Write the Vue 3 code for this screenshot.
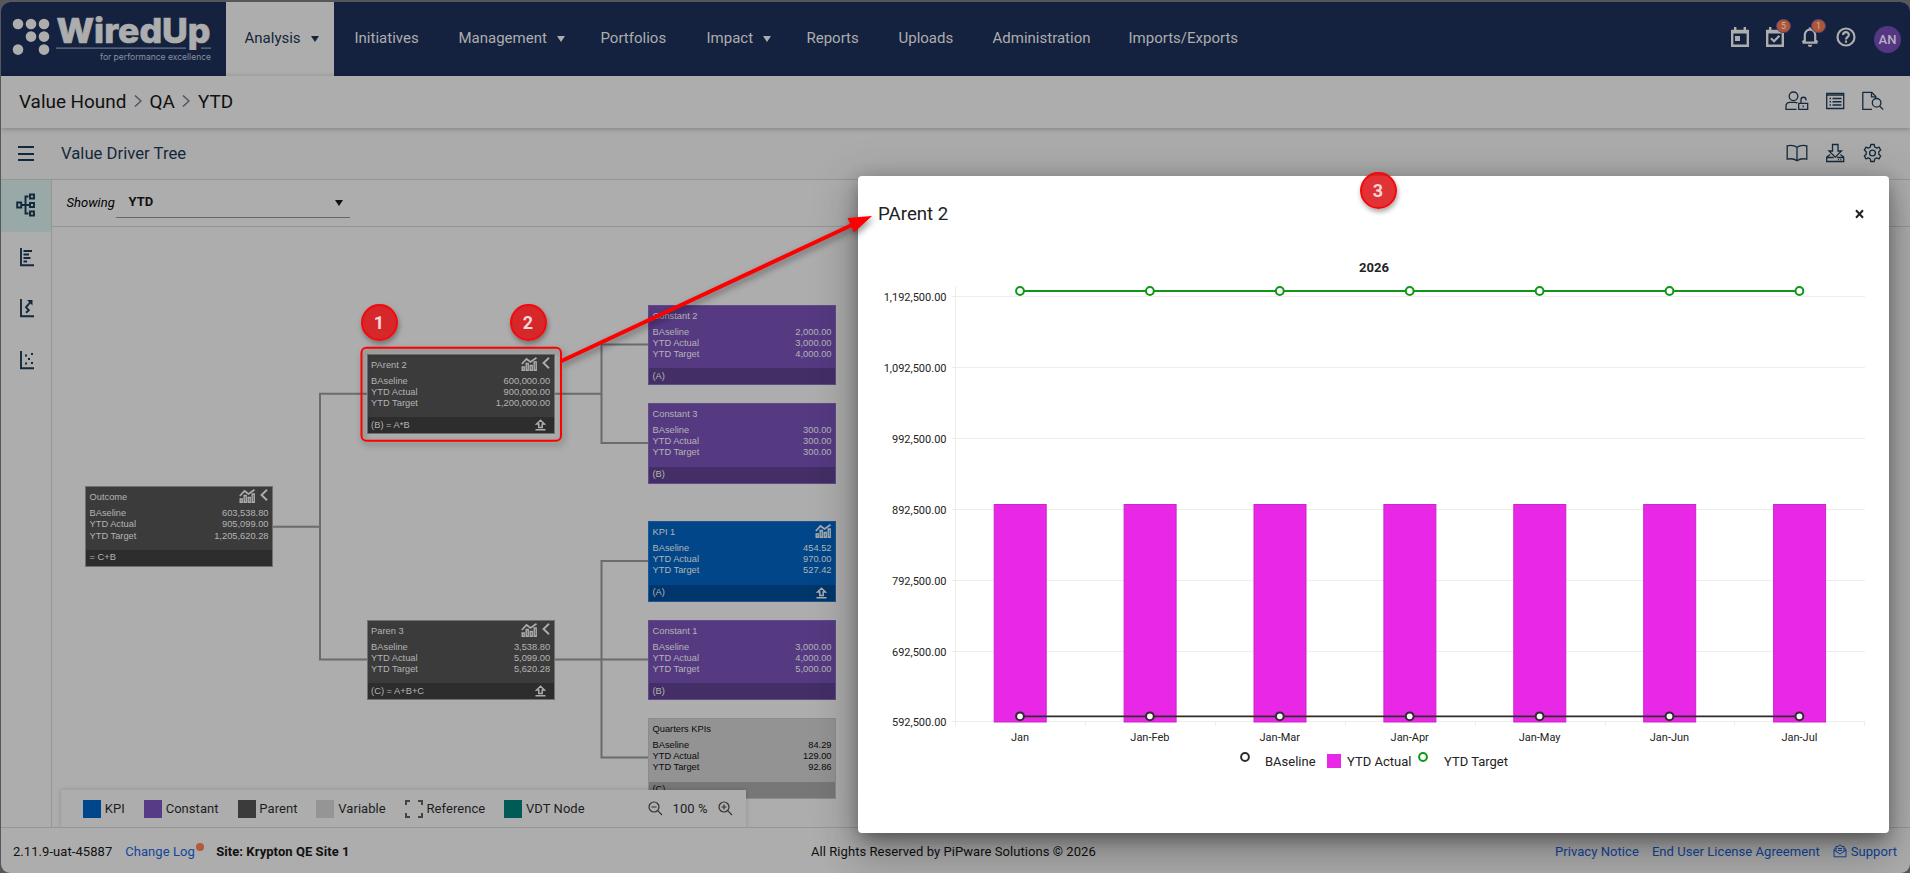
<script setup>
const nav = [
  { t: 'Analysis', caret: true, active: true },
  { t: 'Initiatives' },
  { t: 'Management', caret: true },
  { t: 'Portfolios' },
  { t: 'Impact', caret: true },
  { t: 'Reports' },
  { t: 'Uploads' },
  { t: 'Administration' },
  { t: 'Imports/Exports' },
]

const nodes = [
  { name: 'Outcome', kind: 'parent', x: 85, y: 486.2, v: ['603,538.80', '905,099.00', '1,205,620.28'], f: '= C+B', chart: true, fold: true },
  { name: 'PArent 2', kind: 'parent', x: 366.6, y: 353.8, v: ['600,000.00', '900,000.00', '1,200,000.00'], f: '(B) = A*B', chart: true, fold: true, up: true },
  { name: 'Paren 3', kind: 'parent', x: 366.6, y: 619.6, v: ['3,538.80', '5,099.00', '5,620.28'], f: '(C) = A+B+C', chart: true, fold: true, up: true },
  { name: 'Constant 2', kind: 'constant', x: 648, y: 304.6, v: ['2,000.00', '3,000.00', '4,000.00'], f: '(A)' },
  { name: 'Constant 3', kind: 'constant', x: 648, y: 403, v: ['300.00', '300.00', '300.00'], f: '(B)' },
  { name: 'KPI 1', kind: 'kpi', x: 648, y: 521, v: ['454.52', '970.00', '527.42'], f: '(A)', chart: true, up: true },
  { name: 'Constant 1', kind: 'constant', x: 648, y: 619.6, v: ['3,000.00', '4,000.00', '5,000.00'], f: '(B)' },
  { name: 'Quarters KPIs', kind: 'variable', x: 648, y: 718, v: ['84.29', '129.00', '92.86'], f: '(C)' },
]
const rowNames = ['BAseline', 'YTD Actual', 'YTD Target']

const legend = [
  { t: 'KPI', c: 'kpi' },
  { t: 'Constant', c: 'constant' },
  { t: 'Parent', c: 'parent' },
  { t: 'Variable', c: 'variable' },
  { t: 'Reference', c: 'reference' },
  { t: 'VDT Node', c: 'vdt' },
]

const ticks = ['1,192,500.00', '1,092,500.00', '992,500.00', '892,500.00', '792,500.00', '692,500.00', '592,500.00']
const months = ['Jan', 'Jan-Feb', 'Jan-Mar', 'Jan-Apr', 'Jan-May', 'Jan-Jun', 'Jan-Jul']
const gy = (i) => 120.5 + Math.round(i * 70.9)
const cx = (i) => 162 + i * 129.9
</script>

<template>
  <div class="frame">
    <div class="app">
      <header class="topbar">
        <svg class="logo" width="225" height="74" viewBox="1 2 225 74">
          <g fill="#adadad">
            <circle cx="18" cy="24" r="5.3" /><circle cx="31" cy="24" r="5.3" /><circle cx="44" cy="24" r="5.3" />
            <circle cx="31" cy="36.6" r="5.3" /><circle cx="44" cy="36.6" r="5.3" />
            <circle cx="18" cy="49.6" r="5.3" /><circle cx="44" cy="49.6" r="5.3" />
          </g>
          <path d="M56 48.2H186M201 48.2H211" stroke="#6b7485" stroke-width="1.3" />
          <text class="brand" x="56.500" y="43" textLength="154" lengthAdjust="spacingAndGlyphs">WiredUp</text>
          <text class="tag" x="100" y="60" textLength="111" lengthAdjust="spacingAndGlyphs">for performance excellence</text>
        </svg>
        <nav class="nav">
          <div v-for="n in nav" :key="n.t" class="nav-item" :class="{ active: n.active }">
            <span>{{ n.t }}</span><i v-if="n.caret" class="caret"></i>
          </div>
        </nav>
        <div class="top-icons">
          <svg width="18" height="20" viewBox="0 0 18 20"><path d="M1.2 4h15.6v14.8H1.2z" fill="none" stroke="#adadad" stroke-width="2.4" /><path d="M1 3h16v3.500H1zM3 0h2.4v4H3zM12.6 0H15v4h-2.4zM4 9h5v5H4z" fill="#adadad" /></svg>
          <div class="with-badge">
            <svg width="18" height="20" viewBox="0 0 18 20"><path d="M1.2 4h15.6v14.8H1.2z" fill="none" stroke="#adadad" stroke-width="2.4" /><path d="M1 3h16v3.500H1zM3 0h2.4v4H3zM12.6 0H15v4h-2.4z" fill="#adadad" /><path d="M5 11.3l3 3 5.4-5.600" fill="none" stroke="#adadad" stroke-width="2.200" /></svg>
            <b>5</b>
          </div>
          <div class="with-badge">
            <svg width="18" height="20" viewBox="0 0 18 20"><path d="M1.500 15.700h15M3.800 15V8.500C3.800 5 6 2.600 9 2.600s5.200 2.400 5.200 5.900V15M1.500 15.500l2.300-2.500M16.500 15.500l-2.300-2.500" fill="none" stroke="#adadad" stroke-width="2.200" /><path d="M7.700.5h2.600v2.500H7.700zM6.800 17.700h4.400a2.200 2.200 0 0 1-4.400 0z" fill="#adadad" /></svg>
            <b>1</b>
          </div>
          <svg width="20" height="20" viewBox="0 0 20 20"><circle cx="10" cy="10" r="8.500" fill="none" stroke="#adadad" stroke-width="2.200" /><path d="M7.100 8.100c0-4 5.800-3.800 5.800-.3 0 2.200-2.900 2.300-2.900 4.600" fill="none" stroke="#adadad" stroke-width="2.200" /><path d="M8.900 13.600h2.200v2.200H8.900z" fill="#adadad" /></svg>
          <div class="avatar">AN</div>
        </div>
      </header>

      <div class="crumbs">
        <div class="crumb-text">
          <span>Value Hound</span>
          <svg width="8" height="12" viewBox="0 0 8 12"><path d="M1 .5l6 5.500-6 5.500" /></svg>
          <span>QA</span>
          <svg width="8" height="12" viewBox="0 0 8 12"><path d="M1 .5l6 5.500-6 5.500" /></svg>
          <span>YTD</span>
        </div>
        <div class="actions">
          <svg width="24" height="20" viewBox="0 0 24 20"><circle cx="8.500" cy="5.300" r="4.300" /><path d="M11.500 18.300H1v-3c0-2.500 1.500-4 4-4h5c1 0 1.700.200 2.300.600M13.700 12.300h9v6h-9zM16 12.300V8.500c0-3 5-3 5 0v1M18.200 14.500v1.700" /></svg>
          <svg width="24" height="20" viewBox="0 0 24 20"><path d="M3.700 2.500h17v15h-17zM3.700 4.200h17" /><path d="M6.500 7.500h1.500M9.500 7.500h9M6.500 10.700h1.500M9.500 10.700h9M6.500 14h1.500M9.500 14h9" stroke-width="1.600" /></svg>
          <svg width="24" height="20" viewBox="0 0 24 20"><path d="M12 18.300H2.800V1.300h9l4 4.200V7M11.500 1.300v4.500h4.300" /><circle cx="16.600" cy="11.800" r="4.300" /><path d="M19.600 15l3.600 3.600" /></svg>
        </div>
      </div>

      <div class="toolbar">
        <div class="menu"><i></i><i></i><i></i></div>
        <div class="page-title">Value Driver Tree</div>
        <div class="actions">
          <svg width="24" height="20" viewBox="0 0 24 20"><path d="M12 4.300C9.500 2.500 5.500 2 2.200 2.800v13.400c3.300-.8 7.300-.3 9.800 1.500 2.500-1.800 6.500-2.300 9.800-1.500V2.800C18.500 2 14.500 2.500 12 4.300zM12 4.300v13.400" /></svg>
          <svg width="24" height="20" viewBox="0 0 24 20"><path d="M9.500 1.500h5.500v6.500h3.500l-6.200 6.200L6 8h3.500zM7.200 11.500L3.700 14v4.500h17V14l-3.300-2.500M3.700 14.500h7M14 14.500h6.700M15 16.600h1M17.300 16.600h1" /></svg>
          <svg width="24" height="20" viewBox="0 0 24 20"><circle cx="12.500" cy="10" r="2.900" /><path d="M10.800 1.500h3.400l.5 2.500 1.900 1.100 2.400-.9 1.700 2.900-1.900 1.700v2.400l1.900 1.700-1.700 2.900-2.400-.9-1.900 1.100-.5 2.500h-3.400l-.5-2.500-1.900-1.100-2.400.9-1.700-2.900 1.900-1.700V8.800L4.300 7.100 6 4.200l2.400.9L10.300 4z" stroke-linejoin="round" /></svg>
        </div>
      </div>

      <div class="main">
        <aside class="side">
          <div class="side-item on"><svg width="20" height="24" viewBox="0 0 20 24"><path d="M1.200 9.500h4v5h-4zM14 1.500h4v4h-4zM14 10h4v4h-4zM14 18.500h4v4h-4zM5.200 12H14M12.500 3.500h-3v17h3" /></svg></div>
          <div class="side-item"><svg width="14" height="20" viewBox="0 0 14 20"><path d="M1 1v17.300h13M3.500 4H12M3.500 7.500H9M3.500 11H10.500M3.500 14.500H7" /></svg></div>
          <div class="side-item"><svg width="14" height="20" viewBox="0 0 14 20"><path d="M1 1v17.300h13M6 14.800l2.800-2.500L6 9.300 10.500 4" /><path d="M7 2h5.500v5.500z" fill="#14283b" stroke="none" /></svg></div>
          <div class="side-item"><svg width="14" height="20" viewBox="0 0 14 20"><path d="M1 1v17.300h13M5 5.500h2M11 4h2M8 9h2M5 13.500h2M11 13h2" /></svg></div>
        </aside>
        <section class="work">
          <div class="filter">
            <em>Showing</em>
            <div class="select"><span>YTD</span><i class="caret"></i></div>
          </div>
          <div class="canvas">
            <svg class="wires" width="1858" height="599" viewBox="52 227 1858 599">
              <path d="M273 526.800H320M367 393.800H320V659.500H367M554 393.800H601.500M649 344.500H601.500V443H649M554 659.500H649M649 561H601.500V757.500H649" fill="none" stroke="#6b6b6b" stroke-width="2" />
            </svg>
            <div v-for="n in nodes" :key="n.name" class="node" :class="n.kind" :style="{ left: n.x - 52 + 'px', top: n.y - 227 + 'px' }">
              <div class="node-head">
                <span>{{ n.name }}</span>
                <div class="node-icons">
                  <svg v-if="n.chart" width="17" height="14" viewBox="0 0 17 14"><path d="M.8 7L5.500 2l4 3L15.500.8" stroke-width="1.700" /><path d="M1.200 10h2v3.300h-2zM5.200 6.500h2v6.800h-2zM9.200 8.500h2v4.800h-2zM13.200 5h2v8.300h-2z" stroke-width="1.400" /></svg>
                  <svg v-if="n.fold" width="8" height="12" viewBox="0 0 8 12"><path d="M7 .7L1.500 6 7 11.300" stroke-width="1.900" /></svg>
                </div>
              </div>
              <div class="node-rows">
                <div v-for="(r, i) in rowNames" :key="r"><span>{{ r }}</span><span>{{ n.v[i] }}</span></div>
              </div>
              <div class="node-foot">
                <span>{{ n.f }}</span>
                <svg v-if="n.up" width="11" height="12" viewBox="0 0 11 12"><path d="M5.500 1.200L1.500 5h2.300v3.500h3.400V5h2.300zM.5 10.800h10" stroke-width="1.500" /></svg>
              </div>
            </div>
            <div class="legend">
              <div v-for="l in legend" :key="l.t" class="legend-item"><i :class="l.c"></i><span>{{ l.t }}</span></div>
              <div class="zoom">
                <svg width="15" height="15" viewBox="0 0 15 15"><circle cx="6" cy="6" r="5" /><path d="M9.700 9.700L14 14M3.500 6h5" /></svg>
                <span>100 %</span>
                <svg width="15" height="15" viewBox="0 0 15 15"><circle cx="6" cy="6" r="5" /><path d="M9.700 9.700L14 14M3.500 6h5M6 3.500v5" /></svg>
              </div>
            </div>
          </div>
        </section>
      </div>

      <footer class="foot">
        <div class="foot-left">
          <span class="ver">2.11.9-uat-45887</span>
          <a class="log">Change Log<i></i></a>
          <strong>Site: Krypton QE Site 1</strong>
        </div>
        <span class="rights">All Rights Reserved by PiPware Solutions © 2026</span>
        <div class="foot-right">
          <a class="privacy">Privacy Notice</a>
          <a class="eula">End User License Agreement</a>
          <a class="support">
            <svg width="14" height="14" viewBox="0 0 14 14"><path d="M1 5.500v7.300h12V5.500M1 5.500l2-1.500M13 5.500L11 4M1 6l6 4 6-4M3 7V2.500h2L7 .8l2 1.700h2V7M5 4.500h4M5 6.500h4" /></svg>
            <span>Support</span>
          </a>
        </div>
      </footer>
    </div>

    <div class="dialog">
      <div class="dialog-head">
        <h2>PArent 2</h2>
        <svg width="9" height="10" viewBox="0 0 9 10"><path d="M1 1.200l7 7.600M8 1.200L1 8.800" stroke="#222" stroke-width="2" /></svg>
      </div>
      <svg class="chart" width="1031" height="574" viewBox="0 0 1031 574">
        <text class="year" x="516" y="96" text-anchor="middle">2026</text>
        <g stroke="#ededed">
          <path v-for="(t, i) in ticks" :key="t" :d="`M94 ${gy(i)}H1007`" />
          <path d="M97.500 110V550" />
          <path v-for="i in 7" :key="'x' + i" :d="`M${Math.round(97 + i * 129.9) + 0.5} 546V550`" />
        </g>
        <text v-for="(t, i) in ticks" :key="'t' + t" class="tick" x="88.500" :y="gy(i) + 4" text-anchor="end">{{ t }}</text>
        <g v-for="(m, i) in months" :key="m">
          <rect :x="cx(i) - 25.800" y="328.500" width="52" height="217.500" fill="#e828e6" stroke="#cc25ca" />
          <text class="tick" :x="cx(i)" y="565" text-anchor="middle">{{ m }}</text>
        </g>
        <path d="M162 115H941.400" stroke="#109618" stroke-width="2" />
        <path d="M162 540.300H941.400" stroke="#2d2d2d" stroke-width="1.800" />
        <g v-for="(m, i) in months" :key="'m' + m" fill="#fff" stroke-width="2">
          <circle :cx="cx(i)" cy="115" r="3.900" stroke="#109618" />
          <circle :cx="cx(i)" cy="540.300" r="3.900" stroke="#2d2d2d" />
        </g>
      </svg>
      <div class="chart-legend">
        <svg width="10" height="10" viewBox="0 0 10 10"><circle cx="5" cy="5" r="3.900" stroke="#2d2d2d" /></svg>
        <span class="l1">BAseline</span>
        <i></i>
        <span class="l2">YTD Actual</span>
        <svg width="10" height="10" viewBox="0 0 10 10"><circle cx="5" cy="5" r="3.900" stroke="#109618" /></svg>
        <span class="l3">YTD Target</span>
      </div>
    </div>

    <svg class="marks" width="1910" height="873" viewBox="0 0 1910 873">
      <g class="shade">
        <rect x="361.500" y="347.800" width="199.500" height="93" rx="5" fill="none" stroke="#f00" stroke-width="2" />
        <path d="M561.500 361L852 225" stroke="#f00" stroke-width="4" />
        <path d="M872 216L847.500 218l6.500 14.500z" fill="#f00" />
      </g>
    </svg>
    <div class="pin p1">1</div>
    <div class="pin p2">2</div>
    <div class="pin p3">3</div>
  </div>
</template>

<style>
html, body { margin: 0; background: #56575b; }
</style>

<style scoped>
* { box-sizing: border-box; }
.frame { position: relative; width: 1910px; height: 873px; overflow: hidden; background: #56575b; font-family: Roboto, "Liberation Sans", sans-serif; padding: 2px 0 0 1px; }
.app { height: 871px; display: flex; flex-direction: column; background: #adadad; border-radius: 9px; overflow: hidden; }
.topbar { height: 74px; flex: none; display: flex; background: #142240; }
.logo { flex: none; display: block; }
.brand { font: 800 34px Inter, sans-serif; fill: #adadad; stroke: #adadad; stroke-width: .7px; }
.tag { font: 400 9px Inter, sans-serif; fill: #8a909c; }
.nav { display: grid; grid-template-columns: 108px 104px 142px 106px 100px 92px 94px 136px 149px; }
.nav-item { display: flex; align-items: center; padding: 0 0 2px 20.500px; font-size: 15px; color: #adadad; white-space: nowrap; gap: 10px; }
.nav-item.active { background: #adadad; color: #14263b; padding-left: 18.500px; }
.caret { border: 4px solid transparent; border-top: 6px solid currentColor; border-bottom: 0; margin-top: 2px; }
.top-icons { margin-left: auto; display: flex; padding: 25px 9px 0 0; gap: 17px; }
.top-icons svg { display: block; }
.with-badge { position: relative; width: 18px; height: 20px; }
.with-badge b { position: absolute; left: 10px; top: -8px; width: 15px; height: 14px; border-radius: 7px; background: #ad5638; border: 1px solid #553c70; color: #c4b5ad; font: 9px/12px Roboto, sans-serif; text-align: center; }
.avatar { width: 27px; height: 27px; margin: -1px 0 0 1px; border-radius: 50%; background: #553683; color: #b9aec4; font-size: 13px; font-weight: 500; line-height: 27px; text-align: center; }
.crumbs { height: 52px; flex: none; display: flex; align-items: center; justify-content: space-between; padding: 0 26px 2px 18px; box-shadow: 0 1px 5px rgba(0, 0, 0, .25); z-index: 1; }
.crumb-text { display: flex; align-items: center; gap: 7.600px; font-size: 18.900px; color: #111; }
.crumb-text svg path { fill: none; stroke: #4d545e; stroke-width: 1.500; }
.actions { display: flex; gap: 13.500px; }
.actions svg { display: block; fill: none; stroke: #152a3e; stroke-width: 1.300; }
.toolbar { height: 52px; flex: none; display: flex; align-items: center; border-bottom: 1px solid #969696; padding-right: 26px; background: #ababab; }
.toolbar .actions { margin: -2px 0 0 auto; }
.menu { width: 51px; padding: 0 0 0 17px; display: grid; gap: 4.500px; }
.menu i { width: 16px; height: 2px; background: #14283b; }
.page-title { font-size: 16.700px; color: #14283b; padding-left: 9px; }
.main { flex: 1; display: flex; min-height: 0; }
.side { width: 51px; flex: none; border-right: 1px solid #969696; }
.side-item { height: 51.500px; display: flex; align-items: center; justify-content: center; padding: 0 0 2px 2px; }
.side-item.on { background: #98a9a8; padding: 0 0 2px; height: 52px; }
.side-item svg { fill: none; stroke: #14283b; stroke-width: 1.900; }
.work { flex: 1; min-width: 0; display: flex; flex-direction: column; }
.filter { height: 47px; flex: none; border-bottom: 1px solid #969696; display: flex; align-items: flex-start; padding-left: 14.500px; }
.filter em { font-size: 13px; color: #000; width: 49.500px; padding-top: 15px; }
.select { width: 234px; height: 38px; border-bottom: 1px solid #666; display: flex; align-items: center; justify-content: space-between; padding: 4px 7px 0 12.500px; font-size: 13px; font-weight: 700; color: #111; }
.select span { margin-top: 2px; }
.select .caret { margin-top: 5px; }
.canvas { flex: 1; position: relative; overflow: hidden; }
.wires { position: absolute; left: 0; top: 0; }
.node { position: absolute; width: 188px; height: 80.500px; border: 1px solid #707070; background: #3b3b3b; color: #b4b4b4; font: 9.300px/11px "Liberation Sans", Arial, sans-serif; display: flex; flex-direction: column; }
.node svg { display: block; fill: none; stroke: #adadad; }
.node-head { height: 21px; display: flex; justify-content: space-between; padding: 5px 4px 0 3.500px; }
.node-icons { display: flex; gap: 4px; margin-top: -3px; }
.node-rows { padding: 0 3.500px; height: 41.500px; }
.node-rows div { display: flex; justify-content: space-between; height: 11.200px; }
.node-foot { flex: 1; background: #2d2d2d; display: flex; justify-content: space-between; align-items: center; padding: 0 8px 0 3.500px; }
.node.constant { background: #553a82; border-color: #604a88; }
.node.constant .node-foot { background: #432f66; }
.node.kpi { background: #004689; border-color: #1c5590; }
.node.kpi .node-foot { background: #00366b; }
.node.kpi .node-icons { margin-right: -1px; }
.node.variable { background: #939393; border-color: #8c8c8c; color: #0a0a0a; }
.node.variable .node-foot { background: #777; }
.legend { position: absolute; left: 9px; bottom: 0; width: 685px; height: 37px; background: #adadad; box-shadow: 0 0 5px rgba(0, 0, 0, .18); display: flex; align-items: center; padding: 0 0 0 22px; font-size: 13px; letter-spacing: .05px; color: #1d1d1d; gap: 19px; }
.legend-item { display: flex; align-items: center; gap: 3.800px; white-space: nowrap; }
.legend-item i { width: 18px; height: 18px; flex: none; }
.legend-item .kpi { background: #00468c; }
.legend-item .constant { background: #583b86; }
.legend-item .parent { background: #3b3b3b; }
.legend-item .variable { background: #959595; }
.legend-item .vdt { background: #005a56; }
.legend-item .reference { background:
  linear-gradient(#444, #444) 0 0 / 5px 2px, linear-gradient(#444, #444) 0 0 / 2px 5px,
  linear-gradient(#444, #444) 100% 0 / 5px 2px, linear-gradient(#444, #444) 100% 0 / 2px 5px,
  linear-gradient(#444, #444) 0 100% / 5px 2px, linear-gradient(#444, #444) 0 100% / 2px 5px,
  linear-gradient(#444, #444) 100% 100% / 5px 2px, linear-gradient(#444, #444) 100% 100% / 2px 5px;
  background-repeat: no-repeat; }
.zoom { margin-left: auto; display: flex; align-items: center; gap: 10px; padding-right: 13.500px; }
.zoom svg { fill: none; stroke: #333; stroke-width: 1.200; }
.foot { height: 46px; flex: none; border-top: 1px solid #969696; display: grid; grid-template-columns: 810px 1fr auto; align-items: center; font-size: 13px; letter-spacing: .06px; color: #111; padding: 2px 13px 0 0; }
.foot-left { display: flex; padding-left: 12px; gap: 13px; }
.foot a { color: #12459b; }
.log { display: flex; width: 78px; position: relative; }
.log i { position: absolute; right: -1px; top: -1px; width: 8px; height: 8px; border-radius: 50%; background: #b4593a; }
.foot-right { display: flex; gap: 13px; }
.support { display: flex; gap: 4px; }
.support svg { fill: none; stroke: #12459b; stroke-width: 1; }
.dialog { position: absolute; left: 858px; top: 176px; width: 1031px; height: 657px; background: #fff; border-radius: 4px; box-shadow: 0 11px 15px -7px rgba(0, 0, 0, .2), 0 24px 38px 3px rgba(0, 0, 0, .14), 0 9px 46px 8px rgba(0, 0, 0, .12), 0 4px 18px rgba(0, 0, 0, .25); }
.dialog-head { height: 74px; display: flex; align-items: center; justify-content: space-between; padding: 2px 25px 0 20px; }
.dialog-head h2 { margin: 0; font-size: 18.700px; font-weight: 400; color: #222; }
.chart { display: block; margin-top: -74px; overflow: visible; }
.year { font-size: 13px; font-weight: 700; fill: #232323; }
.tick { font-size: 11px; fill: #232323; }
.chart-legend { display: flex; align-items: center; height: 22px; font-size: 13px; color: #232323; padding-left: 381.500px; }
.chart-legend svg { fill: #fff; stroke-width: 2; margin-top: -9px; }
.chart-legend i { width: 14px; height: 14px; background: #e828e6; }
.l1 { width: 62px; margin-left: 15.500px; }
.l2 { width: 71px; margin-left: 6px; }
.l3 { margin-left: 16px; }
.marks { position: absolute; left: 0; top: 0; pointer-events: none; }
.shade { filter: drop-shadow(2px 3px 3px rgba(0, 0, 0, .4)); }
.pin { position: absolute; width: 37px; height: 37px; border-radius: 50%; background: rgba(220, 20, 24, .87); border: 2px solid #f5080c; color: #f2dada; font-size: 18px; font-weight: 700; line-height: 33px; text-align: center; box-shadow: 1px 3px 5px rgba(0, 0, 0, .35); }
.p1 { left: 360.500px; top: 303.500px; }
.p2 { left: 509.500px; top: 303.500px; }
.p3 { left: 1359.500px; top: 171.500px; }
</style>
